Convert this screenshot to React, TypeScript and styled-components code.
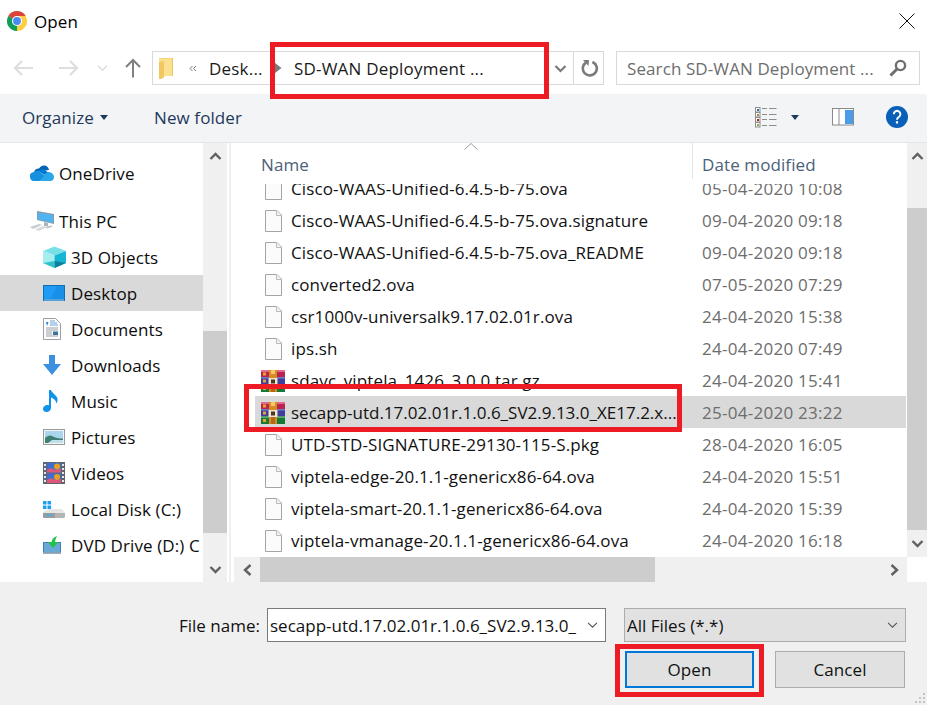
import React from "react";
import styled, { createGlobalStyle } from "styled-components";

const FONT = `"Open Sans", "Noto Sans", "Liberation Sans", sans-serif`;

const Global = createGlobalStyle`
  html, body { margin: 0; padding: 0; background: #fff; }
  * { box-sizing: border-box; }
`;

const Dialog = styled.div`
  position: relative;
  width: 927px;
  height: 705px;
  overflow: hidden;
  display: flex;
  flex-direction: column;
  background: #fff;
  font-family: ${FONT};
  font-size: 17px;
  letter-spacing: 0.1px;
  color: #111;
`;

const TitleBar = styled.div`
  height: 44px;
  flex: none;
  display: flex;
  align-items: center;
  padding: 0 12px 2px 6px;
  gap: 6px;
  font-size: 17px;
  color: #000;
`;
const TitleText = styled.span`
  flex: 1;
`;

const NavBar = styled.div`
  height: 50px;
  flex: none;
  display: flex;
  align-items: flex-start;
  padding: 7px 7px 0 13px;
`;
const NavButtons = styled.div`
  width: 139px;
  height: 34px;
  flex: none;
  display: flex;
  align-items: center;
`;
const NavGap = styled.span<{ $w: number }>`
  flex: none;
  width: ${(p) => p.$w}px;
`;
const AddressBox = styled.div`
  width: 452px;
  height: 34px;
  flex: none;
  display: flex;
  align-items: center;
  border: 1px solid #d9d9d9;
  padding-left: 6px;
  color: #1a1a1a;
  letter-spacing: 0.2px;
`;
const Crumb = styled.span<{ $w: number }>`
  flex: none;
  width: ${(p) => p.$w}px;
  white-space: nowrap;
`;
const AddrDivider = styled.span`
  width: 1px;
  height: 32px;
  flex: none;
  background: #d9d9d9;
`;
const SearchBox = styled.div`
  margin-left: 12px;
  width: 304px;
  height: 34px;
  flex: none;
  display: flex;
  align-items: center;
  justify-content: space-between;
  border: 1px solid #d9d9d9;
  padding: 0 12px 0 10px;
  color: #6d6d6d;
  white-space: nowrap;
`;

const Toolbar = styled.div`
  height: 49px;
  flex: none;
  display: flex;
  align-items: center;
  background: #f3f4f6;
  border-bottom: 1px solid #e6e6e6;
  padding: 0 19px 2px 22px;
  color: #1e395b;
`;
const ToolLabel = styled.span<{ $w: number }>`
  width: ${(p) => p.$w}px;
  flex: none;
  white-space: nowrap;
`;
const ToolSpacer = styled.span`
  flex: 1;
`;

const Body = styled.div`
  height: 439px;
  flex: none;
  display: flex;
`;
const Sidebar = styled.div`
  width: 203px;
  flex: none;
  overflow: hidden;
  padding-top: 12px;
  background: #fff;
`;
const NavItem = styled.div<{ $level: number; $active?: boolean; $mt?: number }>`
  height: 36px;
  margin-top: ${(p) => p.$mt ?? 0}px;
  display: flex;
  align-items: center;
  white-space: nowrap;
  overflow: hidden;
  padding-left: ${(p) => (p.$level === 1 ? 30 : 43)}px;
  background: ${(p) => (p.$active ? "#d9d9d9" : "transparent")};
  color: #0c0c0c;
`;
const NavIconSlot = styled.span<{ $level: number }>`
  width: ${(p) => (p.$level === 1 ? 29 : 28)}px;
  flex: none;
  display: flex;
  align-items: center;
`;

const VScroll = styled.div<{ $w: number }>`
  width: ${(p) => p.$w}px;
  flex: none;
  display: flex;
  flex-direction: column;
  background: #f0f0f0;
`;
const ArrowCell = styled.div<{ $h: number }>`
  height: ${(p) => p.$h}px;
  flex: none;
  display: flex;
  align-items: center;
  justify-content: center;
  color: #606060;
`;
const VTrack = styled.div<{ $pad: number }>`
  flex: 1;
  padding-top: ${(p) => p.$pad}px;
`;
const VThumb = styled.div<{ $h: number }>`
  height: ${(p) => p.$h}px;
  background: #cdcdcd;
`;

const Divider = styled.div`
  width: 5px;
  flex: none;
  background: #fff;
  display: flex;
  justify-content: center;
`;
const DividerLine = styled.span`
  width: 2px;
  background: #f0f0f0;
`;

const FilePane = styled.div`
  flex: 1;
  min-width: 0;
  display: grid;
  grid-template-columns: 675px 20px;
  grid-template-rows: 414px 25px;
`;
const ListColumn = styled.div`
  display: flex;
  flex-direction: column;
  overflow: hidden;
`;
const ColumnHeader = styled.div`
  position: relative;
  height: 41px;
  flex: none;
  display: flex;
  padding-left: 29px;
  padding-top: 10px;
  color: #4c607a;
  background: #fff;
`;
const HeaderName = styled.span`
  width: 431px;
  flex: none;
`;
const HeaderDate = styled.span`
  border-left: 1px solid #e5e5e5;
  margin-top: -10px;
  padding: 10px 0 0 9px;
  height: 36px;
  white-space: nowrap;
`;
const SortMark = styled.span`
  position: absolute;
  left: 232px;
  top: 0;
  display: flex;
`;
const Rows = styled.div`
  flex: 1;
  overflow: hidden;
`;
const RowList = styled.div`
  margin-top: -12px;
`;
const Row = styled.div<{ $selected?: boolean }>`
  height: 32px;
  display: flex;
  align-items: center;
  margin-left: 23px;
  margin-right: 1px;
  background: ${(p) => (p.$selected ? "#d9d9d9" : "transparent")};
`;
const IconCell = styled.span`
  width: 36px;
  flex: none;
  display: flex;
  align-items: center;
  justify-content: center;
  padding-top: 2px;
`;
const NameCell = styled.span<{ $tight?: boolean }>`
  width: 411px;
  flex: none;
  white-space: nowrap;
  overflow: hidden;
  color: #111;
  letter-spacing: ${(p) => (p.$tight ? "0" : "0.12px")};
`;
const DateCell = styled.span`
  white-space: nowrap;
  color: #6d6d6d;
  letter-spacing: 0.27px;
`;

const HScroll = styled.div`
  display: flex;
  background: #f0f0f0;
  margin-left: 2px;
`;
const HArrow = styled.div`
  width: 26px;
  flex: none;
  display: flex;
  align-items: center;
  justify-content: center;
  color: #606060;
`;
const HThumb = styled.div`
  width: 395px;
  flex: none;
  background: #cdcdcd;
`;
const HFill = styled.div`
  flex: 1;
`;
const Corner = styled.div`
  background: #fff;
`;

const Footer = styled.div`
  position: relative;
  flex: 1;
  background: #f0f0f0;
  padding: 26px 21px 0 179px;
  display: flex;
  flex-direction: column;
  align-items: flex-end;
  gap: 9px;
`;
const FormRow = styled.div`
  display: flex;
  align-items: center;
  align-self: stretch;
`;
const FieldLabel = styled.label`
  width: 88px;
  flex: none;
  color: #111;
  letter-spacing: 0;
`;
const ComboField = styled.div<{ $gray?: boolean; $w: number; $ml: number }>`
  width: ${(p) => p.$w}px;
  margin-left: ${(p) => p.$ml}px;
  height: 34px;
  flex: none;
  display: flex;
  align-items: center;
  justify-content: space-between;
  padding: 0 7px 0 2px;
  white-space: nowrap;
  overflow: hidden;
  letter-spacing: 0;
  background: ${(p) => (p.$gray ? "#e1e1e1" : "#fff")};
  border: 1px solid ${(p) => (p.$gray ? "#adadad" : "#7a7a7a")};
  color: #111;
`;
const ButtonRow = styled.div`
  display: flex;
  gap: 21px;
  margin-right: 1px;
`;
const DialogButton = styled.button<{ $primary?: boolean; $w: number }>`
  width: ${(p) => p.$w}px;
  height: 37px;
  background: #e1e1e1;
  border: ${(p) => (p.$primary ? "2px solid #0078d7" : "1px solid #adadad")};
  font: inherit;
  letter-spacing: inherit;
  color: #111;
  padding: 0;
`;
const Grip = styled.span`
  position: absolute;
  right: 1px;
  bottom: 1px;
  display: flex;
`;

const RedBox = styled.div<{ $x: number; $y: number; $w: number; $h: number }>`
  position: absolute;
  left: ${(p) => p.$x}px;
  top: ${(p) => p.$y}px;
  width: ${(p) => p.$w}px;
  height: ${(p) => p.$h}px;
  border: 5px solid #ed1c24;
  pointer-events: none;
`;

const Svg = styled.svg`
  display: block;
  flex: none;
`;

const ChromeIcon = () => (
  <Svg width="22" height="22" viewBox="0 0 48 48">
    <path d="M24 24L43.05 13A22 22 0 0 0 4.95 13Z" fill="#db4437" />
    <path d="M24 24L4.95 13A22 22 0 0 0 24 46Z" fill="#0f9d58" />
    <path d="M24 24L24 46A22 22 0 0 0 43.05 13Z" fill="#ffcd40" />
    <path d="M24 13H43.05L33 24Z" fill="#ffcd40" />
    <circle cx="24" cy="24" r="11" fill="#fff" />
    <circle cx="24" cy="24" r="8.6" fill="#4a8af4" />
  </Svg>
);
const CloseIcon = () => (
  <Svg width="16" height="16" viewBox="0 0 16 16">
    <path d="M.5.5l15 15M15.5.5l-15 15" stroke="#111" strokeWidth="1" fill="none" />
  </Svg>
);
const NavArrow = ({ dir, color, w }: { dir: "l" | "r" | "u"; color: string; w: number }) => {
  if (dir === "u")
    return (
      <Svg width={w} height="20" viewBox="0 0 16 20">
        <path d="M8 19.5V2M1 9l7-7 7 7" stroke={color} strokeWidth="2" fill="none" />
      </Svg>
    );
  return (
    <Svg width={w} height="16" viewBox="0 0 20 16">
      <path
        d={dir === "l" ? "M20 8H2M9 1L2 8l7 7" : "M0 8h18M11 1l7 7-7 7"}
        stroke={color}
        strokeWidth="2.2"
        fill="none"
      />
    </Svg>
  );
};
const Chevron = ({ w, h, sw, dir = "d", color = "currentColor" }: { w: number; h: number; sw: number; dir?: "d" | "u" | "l" | "r"; color?: string }) => {
  const d = { d: "M1 2l5 5 5-5", u: "M1 7l5-5 5 5" }[dir as "d" | "u"];
  if (dir === "l" || dir === "r")
    return (
      <Svg width={w} height={h} viewBox="0 0 9 12">
        <path d={dir === "l" ? "M7.5 1l-5.5 5 5.5 5" : "M1.5 1l5.500 5-5.500 5"} stroke={color} strokeWidth={sw} fill="none" />
      </Svg>
    );
  return (
    <Svg width={w} height={h} viewBox="0 0 12 9">
      <path d={d} stroke={color} strokeWidth={sw} fill="none" />
    </Svg>
  );
};
const FolderIcon = () => (
  <Svg width="15" height="22" viewBox="0 0 15 22">
    <path d="M0 1h14v18H5l-5 2.500Z" fill="#fbe08f" />
    <path d="M0 1h9l5 0v1H0Z" fill="#f5d77a" />
    <path d="M0 19.500V5l5-1v16.500l-3 1.500H0Z" fill="#f1c85f" />
    <path d="M13 1h1v18h-1Z" fill="#e8c468" />
  </Svg>
);
const DoubleChevron = () => (
  <Svg width="8" height="7" viewBox="0 0 8 7">
    <path d="M3.500 1L1 3.500 3.500 6M7 1L4.500 3.500 7 6" stroke="#777" strokeWidth="1" fill="none" />
  </Svg>
);
const CrumbArrow = () => (
  <Svg width="7" height="10" viewBox="0 0 7 10">
    <path d="M0 0l6.500 5L0 10Z" fill="#7a7a7a" />
  </Svg>
);
const RefreshIcon = () => (
  <Svg width="18" height="18" viewBox="0 0 18 18">
    <path d="M4.600 3.900A7 7 0 1 0 11 2.800" stroke="#7a7a7a" strokeWidth="2.600" fill="none" transform="rotate(4 9 9)" />
    <path d="M2 1l6 0 -.5 6Z" fill="#7a7a7a" />
  </Svg>
);
const SearchIcon = () => (
  <Svg width="18" height="18" viewBox="0 0 18 18">
    <circle cx="11.500" cy="6.500" r="4.600" stroke="#6e6e6e" strokeWidth="2.400" fill="none" />
    <path d="M8 10l-6.500 6.500" stroke="#6e6e6e" strokeWidth="3" fill="none" />
  </Svg>
);
const Caret = () => (
  <Svg width="8" height="5" viewBox="0 0 8 5">
    <path d="M0 0h8L4 5Z" fill="#1e395b" />
  </Svg>
);
const ViewIcon = () => (
  <Svg width="22" height="21" viewBox="0 0 22 21">
    <g fill="#fff" stroke="#8d8d8d" strokeWidth="1">
      <rect x=".5" y=".5" width="4.500" height="4.500" />
      <rect x=".5" y="5.500" width="4.500" height="4.500" />
      <rect x=".5" y="10.500" width="4.500" height="4.500" />
      <rect x=".5" y="15.500" width="4.500" height="4.500" />
    </g>
    <rect x="2" y="2" width="2" height="2" fill="#3a6fb0" />
    <rect x="2" y="7" width="2" height="2" fill="#a68a3a" />
    <rect x="2" y="12" width="2" height="2" fill="#c02020" />
    <rect x="2" y="17" width="2" height="2" fill="#8fae3a" />
    <path d="M7 1.500h5M14 1.500h7.500M7 7.500h5M14 7.500h7.500M7 12.500h5M14 12.500h7.500M7 18.500h5M14 18.500h7.500" stroke="#8d8d8d" strokeWidth="1" />
  </Svg>
);
const PaneIcon = () => (
  <Svg width="22" height="18" viewBox="0 0 22 18">
    <rect x=".5" y=".5" width="21" height="16.500" fill="#fff" stroke="#8a8a8a" />
    <rect x="6.500" y="1" width="1" height="16" fill="#8a8a8a" />
    <rect x="13" y="2" width="8" height="14" fill="#4a9be8" />
  </Svg>
);
const HelpIcon = () => (
  <Svg width="22" height="22" viewBox="0 0 22 22">
    <circle cx="11" cy="11" r="11" fill="#0a5fb8" />
    <path d="M7.800 8.200a3.300 3.300 0 1 1 5 2.800c-1.300.8-1.800 1.300-1.800 2.800" stroke="#fff" strokeWidth="2" fill="none" />
    <rect x="9.900" y="15.200" width="2.200" height="2.300" fill="#fff" />
  </Svg>
);
const OneDriveIcon = () => (
  <Svg width="24" height="16" viewBox="0 0 24 16">
    <path d="M4 7a5 5 0 0 1 5-3.500C10.500 1 13 0 15 .5c2 .5 3.500 2 4 4.500Z" fill="#0364b8" />
    <path d="M8 6c2-1.500 4-2 6 -1.500l10 7-5 1Z" fill="#0078d4" />
    <path d="M0 12a4 4 0 0 1 4-5c2-1.500 4-1.500 6 0l6 4.500L10 16H3.500C1.500 16 0 14 0 12Z" fill="#1490df" />
    <path d="M10 16l4-5c1.500-3 3.500-4.500 5.500-4 2.500.5 4.500 2.500 4.500 5 0 2.500-1.500 4-4 4Z" fill="#28a8ea" />
  </Svg>
);
const ThisPcIcon = () => (
  <Svg width="24" height="22" viewBox="0 0 24 22">
    <path d="M7 1l17 3v10L7 10Z" fill="#8a9aa8" />
    <path d="M8 2.500l15 2.600v8L8 9.500Z" fill="#4fb4f0" />
    <path d="M14 12l4 1v3h-4Z" fill="#aab4bc" />
    <path d="M0 17l9-3 3 1-9 4Z" fill="#c8ccd0" />
    <path d="M5 19.500l8-3.500 4 1-8 4Z" fill="#d8dade" />
    <path d="M15 17l6-1.500 2 1-6 2Z" fill="#c0c4c8" />
  </Svg>
);
const CubeIcon = () => (
  <Svg width="23" height="22" viewBox="0 0 23 22">
    <path d="M0 5l11.500-4.500L23 5l-11.500 4.500Z" fill="#79e0e8" />
    <path d="M0 5l11.500 4.500V22L0 17Z" fill="#a4eef0" />
    <path d="M23 5l-11.500 4.500V22L23 17Z" fill="#17b4d4" />
    <path d="M11.500 15l11.500 2-11.500 5Z" fill="#0e7f9c" />
    <path d="M11.500 15L0 17l11.500 5Z" fill="#2ec3cc" />
  </Svg>
);
const DesktopIcon = () => (
  <Svg width="22" height="16" viewBox="0 0 22 16">
    <rect x="0" y="0" width="22" height="16" fill="#0d6fb8" />
    <rect x="1" y="1" width="20" height="13" fill="#1e9bf5" />
    <path d="M14 1h7v13H8Z" fill="#1a8fe8" />
    <rect x="1" y="14.500" width="20" height="1" fill="#9ed4f7" />
  </Svg>
);
const DocumentIcon = () => (
  <Svg width="18" height="22" viewBox="0 0 18 22">
    <path d="M.5.500h12l5 5v16H.5Z" fill="#fdfdfd" stroke="#9aa0a6" />
    <path d="M3 4h2.500L4 8Z" fill="#2a7fd0" />
    <path d="M7 3h5M7 5h7M7 7h8" stroke="#6aa5d8" />
    <path d="M3 10h12M3 12h12M3 14h6M3 16h6M3 18h12" stroke="#98a0a8" />
    <rect x="10" y="13.500" width="5" height="3.500" fill="#38739f" />
  </Svg>
);
const DownloadIcon = () => (
  <Svg width="18" height="20" viewBox="0 0 18 20">
    <path d="M6 0h6v9h6l-9 11L0 9h6Z" fill="#3d8fe0" />
  </Svg>
);
const MusicIcon = () => (
  <Svg width="16" height="22" viewBox="0 0 16 22">
    <path d="M6 0h2c.5 3 6 5 6.500 9 .3 2-.5 3.500-1.500 4.500.3-2-.5-4-5-6v10.500c0 2.300-2 4-4.500 4S0 20.500 0 18.800 2 15 4.500 15c.6 0 1 .1 1.500.2Z" fill="#0f93ea" />
  </Svg>
);
const PicturesIcon = () => (
  <Svg width="22" height="16" viewBox="0 0 22 16">
    <rect x=".5" y=".5" width="21" height="15" fill="#f4f4f4" stroke="#9a9a9a" />
    <rect x="2" y="2" width="18" height="12" fill="#a9d6ee" />
    <path d="M2 9c3-3 6-3.500 9-1 3 1.500 6 1.500 9 1.500V14H2Z" fill="#3f7f73" />
    <path d="M9 11h11v3H5Z" fill="#bfe0ea" />
  </Svg>
);
const VideoIcon = () => (
  <Svg width="22" height="22" viewBox="0 0 22 22">
    <rect width="22" height="22" fill="#5e6770" />
    <rect x="4" y="1" width="14" height="9.500" fill="#3e6fd0" />
    <rect x="4" y="11.500" width="14" height="9.500" fill="#3e6fd0" />
    <path d="M4 8l4-2 4 2 6-1v3.500H4ZM4 18l4-2 4 2 6-1v4H4Z" fill="#e0567a" />
    <circle cx="14" cy="4.500" r="3" fill="#e8a020" />
    <circle cx="14" cy="15" r="3" fill="#e8a020" />
    <path d="M1 2h2v2H1ZM1 6h2v2H1ZM1 10h2v2H1ZM1 14h2v2H1ZM1 18h2v2H1ZM19 2h2v2h-2ZM19 6h2v2h-2ZM19 10h2v2h-2ZM19 14h2v2h-2ZM19 18h2v2h-2Z" fill="#e8e8e8" />
  </Svg>
);
const DiskIcon = () => (
  <Svg width="22" height="17" viewBox="0 0 22 17">
    <path d="M0 0h3.500v3.500H0ZM4.500 0H8v3.500H4.500ZM0 4.500h3.500V8H0ZM4.500 4.500H8V8H4.500Z" fill="#1ea0f0" />
    <path d="M0 11l6-3h13l3 4v1H0Z" fill="#e6e6e6" />
    <path d="M0 12h22v3.500c0 .8-.7 1.500-1.500 1.500H1.500C.7 17 0 16.300 0 15.500Z" fill="#b4b4b4" />
    <path d="M0 12h12v5H1.500C.7 17 0 16.300 0 15.500Z" fill="#9c9c9c" />
    <rect x="3" y="13.500" width="6" height="1.500" fill="#40b0e8" />
  </Svg>
);
const DvdIcon = () => (
  <Svg width="20" height="18" viewBox="0 0 20 18">
    <rect x="0" y="6" width="18" height="11.500" fill="#3e80b8" />
    <rect x="1" y="7" width="16" height="9.500" fill="#6aa8d8" />
    <rect x="0" y="16" width="18" height="1.500" fill="#8aa0b0" />
    <path d="M14 0c-3 1-5 3-5.500 6H5l5 6 5.500-6h-3.500c.2-2 1-4 2-6Z" fill="#22c24a" />
  </Svg>
);
const FileIcon = () => (
  <Svg width="17" height="22" viewBox="0 0 17 22">
    <path d="M.5.500h11.500l4.500 4.500v16.500H.5Z" fill="#fbfbfb" stroke="#a4a4a4" />
    <path d="M11.500.500v5h5" fill="#f2f2f2" stroke="#bcbcbc" />
  </Svg>
);
const RarIcon = () => (
  <Svg width="24" height="22" viewBox="0 0 24 22">
    <rect x="0" y="0" width="24" height="7" fill="#b8234f" />
    <rect x="0" y="0" width="24" height="2" fill="#e46a8c" />
    <rect x="0" y="7" width="24" height="7.500" fill="#3c3f9e" />
    <rect x="0" y="7" width="24" height="1.500" fill="#7478cc" />
    <rect x="0" y="14.500" width="24" height="7.500" fill="#157a38" />
    <rect x="0" y="14.500" width="24" height="1.500" fill="#54ad6a" />
    <path d="M2 2.500h3v3H2ZM2 9.500h3v3H2ZM2 17h3v3H2Z" fill="#e8a526" />
    <rect x="8" y="0" width="8" height="22" fill="#d98a24" />
    <rect x="10" y="0" width="4" height="4" fill="#f5cc60" />
    <rect x="7.500" y="8" width="9" height="7" fill="#f0e6d0" />
    <rect x="10" y="9.500" width="4" height="4" fill="#4a3a22" />
    <rect x="10" y="15" width="4" height="7" fill="#b06a18" />
  </Svg>
);
const SortChevron = () => (
  <Svg width="14" height="7" viewBox="0 0 14 7">
    <path d="M.5 6.500L7 .5l6.500 6" stroke="#9a9a9a" strokeWidth="1" fill="none" />
  </Svg>
);
const GripIcon = () => (
  <Svg width="12" height="12" viewBox="0 0 12 12">
    <path d="M9 1h2v2H9ZM5 5h2v2H5ZM9 5h2v2H9ZM1 9h2v2H1ZM5 9h2v2H5ZM9 9h2v2H9Z" fill="#c4c4c4" />
  </Svg>
);

type SideEntry = { label: string; level: number; icon: React.ReactNode; active?: boolean; mt?: number };
const sideItems: SideEntry[] = [
  { label: "OneDrive", level: 1, icon: <OneDriveIcon /> },
  { label: "This PC", level: 1, icon: <ThisPcIcon />, mt: 12 },
  { label: "3D Objects", level: 2, icon: <CubeIcon /> },
  { label: "Desktop", level: 2, icon: <DesktopIcon />, active: true },
  { label: "Documents", level: 2, icon: <DocumentIcon /> },
  { label: "Downloads", level: 2, icon: <DownloadIcon /> },
  { label: "Music", level: 2, icon: <MusicIcon /> },
  { label: "Pictures", level: 2, icon: <PicturesIcon /> },
  { label: "Videos", level: 2, icon: <VideoIcon /> },
  { label: "Local Disk (C:)", level: 2, icon: <DiskIcon /> },
  { label: "DVD Drive (D:) C", level: 2, icon: <DvdIcon /> },
];

type FileEntry = { name: string; date: string; rar?: boolean; selected?: boolean };
const files: FileEntry[] = [
  { name: "Cisco-WAAS-Unified-6.4.5-b-75.ova", date: "05-04-2020 10:08" },
  { name: "Cisco-WAAS-Unified-6.4.5-b-75.ova.signature", date: "09-04-2020 09:18" },
  { name: "Cisco-WAAS-Unified-6.4.5-b-75.ova_README", date: "09-04-2020 09:18" },
  { name: "converted2.ova", date: "07-05-2020 07:29" },
  { name: "csr1000v-universalk9.17.02.01r.ova", date: "24-04-2020 15:38" },
  { name: "ips.sh", date: "24-04-2020 07:49" },
  { name: "sdavc_viptela_1426_3.0.0.tar.gz", date: "24-04-2020 15:41", rar: true },
  { name: "secapp-utd.17.02.01r.1.0.6_SV2.9.13.0_XE17.2.x...", date: "25-04-2020 23:22", rar: true, selected: true },
  { name: "UTD-STD-SIGNATURE-29130-115-S.pkg", date: "28-04-2020 16:05" },
  { name: "viptela-edge-20.1.1-genericx86-64.ova", date: "24-04-2020 15:51" },
  { name: "viptela-smart-20.1.1-genericx86-64.ova", date: "24-04-2020 15:39" },
  { name: "viptela-vmanage-20.1.1-genericx86-64.ova", date: "24-04-2020 16:18" },
];

export default function App() {
  return (
    <Dialog>
      <Global />
      <TitleBar>
        <ChromeIcon />
        <TitleText>Open</TitleText>
        <CloseIcon />
      </TitleBar>

      <NavBar>
        <NavButtons>
          <NavArrow dir="l" color="#dedede" w={20} />
          <NavGap $w={26} />
          <NavArrow dir="r" color="#dedede" w={20} />
          <NavGap $w={18} />
          <Chevron w={11} h={8} sw={1.6} color="#dedede" />
          <NavGap $w={17} />
          <NavArrow dir="u" color="#808080" w={16} />
        </NavButtons>
        <AddressBox>
          <FolderIcon />
          <NavGap $w={15} />
          <DoubleChevron />
          <NavGap $w={12} />
          <Crumb $w={66}>Desk...</Crumb>
          <CrumbArrow />
          <NavGap $w={12} />
          <Crumb $w={260}>SD-WAN Deployment ...</Crumb>
          <Chevron w={13} h={9} sw={2.2} color="#7a7a7a" />
          <NavGap $w={6} />
          <AddrDivider />
          <NavGap $w={7} />
          <RefreshIcon />
        </AddressBox>
        <SearchBox>
          Search SD-WAN Deployment ...
          <SearchIcon />
        </SearchBox>
      </NavBar>

      <Toolbar>
        <ToolLabel $w={78}>Organize</ToolLabel>
        <Caret />
        <NavGap $w={46} />
        <ToolLabel $w={120}>New folder</ToolLabel>
        <ToolSpacer />
        <ViewIcon />
        <NavGap $w={14} />
        <Caret />
        <NavGap $w={33} />
        <PaneIcon />
        <NavGap $w={32} />
        <HelpIcon />
      </Toolbar>

      <Body>
        <Sidebar>
          {sideItems.map((it) => (
            <NavItem key={it.label} $level={it.level} $active={it.active} $mt={it.mt}>
              <NavIconSlot $level={it.level}>{it.icon}</NavIconSlot>
              {it.label}
            </NavItem>
          ))}
        </Sidebar>
        <VScroll $w={24}>
          <ArrowCell $h={27}>
            <Chevron w={13} h={9} sw={2.4} dir="u" />
          </ArrowCell>
          <VTrack $pad={161}>
            <VThumb $h={202} />
          </VTrack>
          <ArrowCell $h={26}>
            <Chevron w={13} h={9} sw={2.4} />
          </ArrowCell>
        </VScroll>
        <Divider>
          <DividerLine />
        </Divider>
        <FilePane>
          <ListColumn>
            <ColumnHeader>
              <HeaderName>Name</HeaderName>
              <HeaderDate>Date modified</HeaderDate>
              <SortMark>
                <SortChevron />
              </SortMark>
            </ColumnHeader>
            <Rows>
              <RowList>
                {files.map((f) => (
                  <Row key={f.name} $selected={f.selected}>
                    <IconCell>{f.rar ? <RarIcon /> : <FileIcon />}</IconCell>
                    <NameCell $tight={f.selected}>{f.name}</NameCell>
                    <DateCell>{f.date}</DateCell>
                  </Row>
                ))}
              </RowList>
            </Rows>
          </ListColumn>
          <VScroll $w={20}>
            <ArrowCell $h={27}>
              <Chevron w={13} h={9} sw={2.4} dir="u" />
            </ArrowCell>
            <VTrack $pad={38}>
              <VThumb $h={322} />
            </VTrack>
            <ArrowCell $h={27}>
              <Chevron w={13} h={9} sw={2.4} />
            </ArrowCell>
          </VScroll>
          <HScroll>
            <HArrow>
              <Chevron w={9} h={12} sw={2.4} dir="l" />
            </HArrow>
            <HThumb />
            <HFill />
            <HArrow>
              <Chevron w={9} h={12} sw={2.4} dir="r" />
            </HArrow>
          </HScroll>
          <Corner />
        </FilePane>
      </Body>

      <Footer>
        <FormRow>
          <FieldLabel>File name:</FieldLabel>
          <ComboField $w={339} $ml={0}>
            secapp-utd.17.02.01r.1.0.6_SV2.9.13.0_
            <Chevron w={11} h={8} sw={1.2} color="#555" />
          </ComboField>
          <ComboField $gray $w={282} $ml={18}>
            All Files (*.*)
            <Chevron w={11} h={8} sw={1.2} color="#555" />
          </ComboField>
        </FormRow>
        <ButtonRow>
          <DialogButton $primary $w={129}>Open</DialogButton>
          <DialogButton $w={130}>Cancel</DialogButton>
        </ButtonRow>
        <Grip>
          <GripIcon />
        </Grip>
      </Footer>

      <RedBox $x={270} $y={42} $w={279} $h={57} />
      <RedBox $x={244} $y={384} $w={438} $h={48} />
      <RedBox $x={615} $y={644} $w={149} $h={53} />
    </Dialog>
  );
}
